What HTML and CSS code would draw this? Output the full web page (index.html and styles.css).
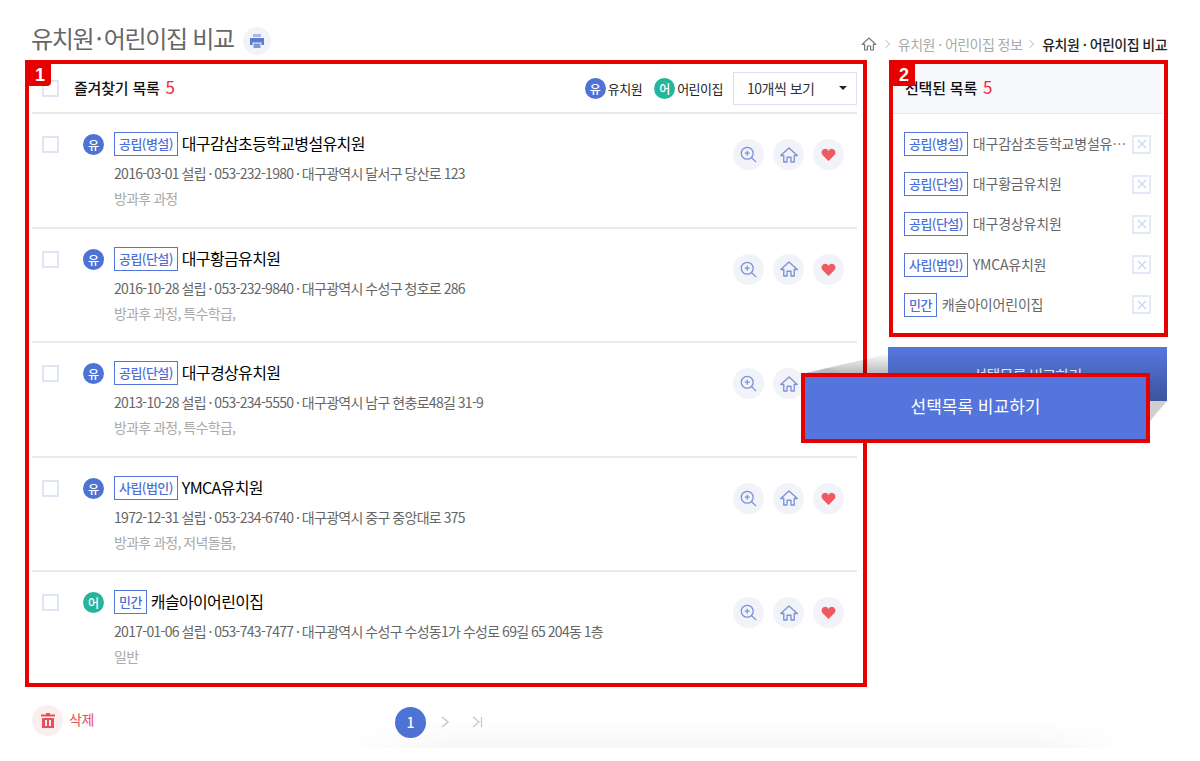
FILE: index.html
```html
<!DOCTYPE html>
<html lang="ko">
  <head>
    <meta charset="UTF-8" />
    <meta name="viewport" content="width=device-width, initial-scale=1.0" />
    <title>유치원·어린이집 비교</title>
    <link rel="stylesheet" href="styles.css">
  </head>
  <body>
    <svg class="defs" width="0" height="0">
      <symbol id="i-zoom" viewBox="0 0 20 20">
        <circle cx="8.500" cy="8.500" r="7" fill="none" stroke="#7b93d6" stroke-width="1.500" />
        <path d="M13.500 13.500L19 19M8.500 5.500v6M5.500 8.500h6" fill="none" stroke="#7b93d6" stroke-width="1.500" />
      </symbol>
      <symbol id="i-home" viewBox="0 0 20 20">
        <path d="M.8 10.500L10 2.200l9.200 8.300h-3.400v7.300h-3.600v-5.300H7.800v5.300H4.200v-7.300z" fill="none" stroke="#7b93d6" stroke-width="1.500" stroke-linejoin="round" />
      </symbol>
      <symbol id="i-heart" viewBox="0 0 20 20">
        <path d="M10 18.500L2 10.600C-.4 8 .6 2.800 5 2.500 7.300 2.300 9 3.500 10 5.300 11 3.500 12.700 2.300 15 2.500 19.400 2.800 20.400 8 18 10.600z" fill="#ee5a5f" />
      </symbol>
      <symbol id="i-close" viewBox="0 0 10 10">
        <path d="M1 1l8 8M9 1L1 9" stroke="#c9d5f2" stroke-width="1.300" fill="none" />
      </symbol>
    </svg>

    <div class="page">
      <header class="top">
        <div class="title-wrap">
          <h1>유치원<span class="dot">·</span>어린이집 비교</h1>
          <span class="print-btn">
            <svg width="16" height="16" viewBox="0 0 16 16">
              <path d="M4 1h8v3H4z" fill="#a9b9e4" />
              <path d="M1 5h14v7h-2.500V9.500h-9V12H1z" fill="#5b7bcf" />
              <path d="M4.500 10.500h7V15h-7z" fill="#7f98da" />
            </svg>
          </span>
        </div>
        <nav class="crumbs">
          <svg class="crumb-home" width="16" height="16" viewBox="0 0 20 20">
            <path d="M1.500 10.500L10 2.500l8.500 8h-3v7h-3.500v-5h-4v5H4.500v-7z" fill="none" stroke="#777" stroke-width="1.500" stroke-linejoin="round" />
          </svg>
          <span class="sep"></span>
          <span>유치원 · 어린이집 정보</span>
          <span class="sep"></span>
          <strong>유치원 · 어린이집 비교</strong>
        </nav>
      </header>

      <div class="columns">
        <main class="list-col">
          <div class="list-head">
            <span class="check"></span>
            <span class="head-title">즐겨찾기 목록 <em>5</em></span>
            <div class="legend">
              <span class="kind kind-yu">유</span><span class="legend-label">유치원</span>
              <span class="kind kind-eo">어</span><span class="legend-label">어린이집</span>
            </div>
            <div class="select">10개씩 보기<i class="caret"></i></div>
          </div>

          <div class="row">
            <span class="check"></span>
            <span class="kind kind-yu">유</span>
            <div class="row-body">
              <div class="row-name"><span class="tag">공립(병설)</span>대구감삼초등학교병설유치원</div>
              <p class="row-info">2016-03-01 설립 · 053-232-1980 · 대구광역시 달서구 당산로 123</p>
              <p class="row-extra">방과후 과정</p>
            </div>
            <div class="actions">
              <span class="act"><svg class="ic-zoom"><use href="#i-zoom" /></svg></span>
              <span class="act"><svg class="ic-home"><use href="#i-home" /></svg></span>
              <span class="act"><svg class="ic-heart"><use href="#i-heart" /></svg></span>
            </div>
          </div>

          <div class="row">
            <span class="check"></span>
            <span class="kind kind-yu">유</span>
            <div class="row-body">
              <div class="row-name"><span class="tag">공립(단설)</span>대구황금유치원</div>
              <p class="row-info">2016-10-28 설립 · 053-232-9840 · 대구광역시 수성구 청호로 286</p>
              <p class="row-extra">방과후 과정, 특수학급,</p>
            </div>
            <div class="actions">
              <span class="act"><svg class="ic-zoom"><use href="#i-zoom" /></svg></span>
              <span class="act"><svg class="ic-home"><use href="#i-home" /></svg></span>
              <span class="act"><svg class="ic-heart"><use href="#i-heart" /></svg></span>
            </div>
          </div>

          <div class="row">
            <span class="check"></span>
            <span class="kind kind-yu">유</span>
            <div class="row-body">
              <div class="row-name"><span class="tag">공립(단설)</span>대구경상유치원</div>
              <p class="row-info">2013-10-28 설립 · 053-234-5550 · 대구광역시 남구 현충로48길 31-9</p>
              <p class="row-extra">방과후 과정, 특수학급,</p>
            </div>
            <div class="actions">
              <span class="act"><svg class="ic-zoom"><use href="#i-zoom" /></svg></span>
              <span class="act"><svg class="ic-home"><use href="#i-home" /></svg></span>
              <span class="act"><svg class="ic-heart"><use href="#i-heart" /></svg></span>
            </div>
          </div>

          <div class="row">
            <span class="check"></span>
            <span class="kind kind-yu">유</span>
            <div class="row-body">
              <div class="row-name"><span class="tag">사립(법인)</span>YMCA유치원</div>
              <p class="row-info">1972-12-31 설립 · 053-234-6740 · 대구광역시 중구 중앙대로 375</p>
              <p class="row-extra">방과후 과정, 저녁돌봄,</p>
            </div>
            <div class="actions">
              <span class="act"><svg class="ic-zoom"><use href="#i-zoom" /></svg></span>
              <span class="act"><svg class="ic-home"><use href="#i-home" /></svg></span>
              <span class="act"><svg class="ic-heart"><use href="#i-heart" /></svg></span>
            </div>
          </div>

          <div class="row">
            <span class="check"></span>
            <span class="kind kind-eo">어</span>
            <div class="row-body">
              <div class="row-name"><span class="tag">민간</span>캐슬아이어린이집</div>
              <p class="row-info">2017-01-06 설립 · 053-743-7477 · 대구광역시 수성구 수성동1가 수성로 69길 65 204동 1층</p>
              <p class="row-extra">일반</p>
            </div>
            <div class="actions">
              <span class="act"><svg class="ic-zoom"><use href="#i-zoom" /></svg></span>
              <span class="act"><svg class="ic-home"><use href="#i-home" /></svg></span>
              <span class="act"><svg class="ic-heart"><use href="#i-heart" /></svg></span>
            </div>
          </div>

          <footer class="list-foot">
            <div class="delete">
              <span class="delete-icon">
                <svg width="14" height="15" viewBox="0 0 14 15">
                  <path d="M5 0h4v1.500h5V3.500H0V1.500h5zM1 5h12v10H1zM4 7v6h2V7zM8 7v6h2V7z" fill="#e8505a" fill-rule="evenodd" />
                </svg>
              </span>
              <span class="delete-label">삭제</span>
            </div>
            <div class="pager">
              <span class="page-now">1</span>
              <svg class="page-arrow" width="10" height="12" viewBox="0 0 10 12"><path d="M2 1l6 5-6 5" fill="none" stroke="#c8c8c8" stroke-width="1.500" /></svg>
              <svg class="page-arrow" width="11" height="12" viewBox="0 0 11 12"><path d="M1 1l6 5-6 5M9.500 1v10" fill="none" stroke="#c8c8c8" stroke-width="1.300" /></svg>
            </div>
          </footer>
        </main>

        <aside class="side-col">
          <div class="side-panel">
            <div class="side-head">선택된 목록 <em>5</em></div>
            <ul class="side-list">
              <li><span class="tag">공립(병설)</span><span class="side-name">대구감삼초등학교병설유치원</span><span class="remove"><svg width="10" height="10"><use href="#i-close" /></svg></span></li>
              <li><span class="tag">공립(단설)</span><span class="side-name">대구황금유치원</span><span class="remove"><svg width="10" height="10"><use href="#i-close" /></svg></span></li>
              <li><span class="tag">공립(단설)</span><span class="side-name">대구경상유치원</span><span class="remove"><svg width="10" height="10"><use href="#i-close" /></svg></span></li>
              <li><span class="tag">사립(법인)</span><span class="side-name">YMCA유치원</span><span class="remove"><svg width="10" height="10"><use href="#i-close" /></svg></span></li>
              <li><span class="tag">민간</span><span class="side-name">캐슬아이어린이집</span><span class="remove"><svg width="10" height="10"><use href="#i-close" /></svg></span></li>
            </ul>
          </div>
          <div class="compare-btn">선택목록 비교하기</div>
        </aside>
      </div>
    </div>

    <!-- annotation layer over the page -->
    <div class="floor-shadow"></div>
    <div class="frame frame-list"><span class="num num-1">1</span></div>
    <div class="frame frame-side"><span class="num">2</span></div>
    <svg class="zoom-shade" width="1200" height="761">
      <defs>
        <linearGradient id="shade-top" x1="0" y1="0" x2="0" y2="1">
          <stop offset="0" stop-color="#000" stop-opacity="0.02" />
          <stop offset="1" stop-color="#000" stop-opacity="0.28" />
        </linearGradient>
      </defs>
      <polygon points="801,374 888,354 888,374" fill="url(#shade-top)" />
      <rect x="888" y="354" width="279" height="47" fill="url(#shade-top)" />
      <polygon points="1150,401 1167,401 1150,421" fill="#cfcfcf" />
    </svg>
    <div class="callout">선택목록 비교하기</div>
  </body>
</html>
```

FILE: styles.css
```css
* {
  box-sizing: border-box;
}
html,
body {
  margin: 0;
  height: 761px;
  overflow: hidden;
}
body {
  position: relative;
  background: #fff;
  font-family: "Noto Sans CJK KR", "Noto Sans", sans-serif;
  color: #666;
  letter-spacing: -0.5px;
}
p,
h1,
ul {
  margin: 0;
  padding: 0;
}
em {
  font-style: normal;
  color: #ee2a35;
}
.defs {
  position: absolute;
}
.page {
  padding: 0 33px 0 32px;
}

/* top */
.top {
  display: flex;
  justify-content: space-between;
  height: 64px;
}
.title-wrap {
  display: flex;
  align-items: center;
  height: 56px;
  padding-top: 26px;
}
h1 {
  margin-left: -1px;
  padding-bottom: 7px;
  font-size: 24px;
  font-weight: 400;
  line-height: 24px;
  color: #666;
  letter-spacing: -1.300px;
}
h1 .dot {
  margin: 0 2.500px;
}
.print-btn {
  display: flex;
  align-items: center;
  justify-content: center;
  width: 28px;
  height: 28px;
  margin-left: 9px;
  border-radius: 50%;
  background: #f1f3f9;
}
.crumbs {
  display: flex;
  align-items: center;
  height: 22px;
  margin-top: 33px;
  font-size: 14px;
  color: #aaa;
  letter-spacing: -0.55px;
}
.crumbs strong {
  font-weight: 500;
  color: #222;
}
.crumb-home {
  margin-right: 1px;
}
.sep {
  width: 6px;
  height: 6px;
  margin: 0 9px 0 5px;
  border-top: 1px solid #ccc;
  border-right: 1px solid #ccc;
  transform: rotate(45deg);
}

.columns {
  display: flex;
  justify-content: space-between;
}
.list-col {
  width: 825px;
}
.side-col {
  width: 279px;
}

/* list */
.list-head {
  display: flex;
  align-items: center;
  height: 50px;
  padding: 0 0 0 10px;
  border-bottom: 2px solid #e8e8e8;
}
.check {
  flex: none;
  width: 17px;
  height: 17px;
  border: 2px solid #dfe6f3;
  background: #fff;
}
.head-title {
  margin: -4px 0 0 15px;
  font-size: 15px;
  font-weight: 500;
  color: #111;
  letter-spacing: -0.2px;
}
.head-title em {
  font-size: 17px;
  font-weight: 400;
  margin-left: 2px;
}
.legend {
  display: flex;
  align-items: center;
  margin-left: auto;
  font-size: 13px;
  color: #222;
}
.legend-label {
  margin: 0 12px 0 2px;
}
.legend-label:last-child {
  margin-right: 10px;
}
.kind {
  display: flex;
  align-items: center;
  justify-content: center;
  flex: none;
  width: 21px;
  height: 21px;
  border-radius: 50%;
  font-size: 12px;
  font-weight: 500;
  color: #fff;
  letter-spacing: 0;
}
.kind-yu {
  background: #4e73d6;
}
.kind-eo {
  background: #25b59a;
}
.select {
  display: flex;
  align-items: center;
  justify-content: space-between;
  width: 124px;
  height: 33px;
  padding: 0 9px 0 13px;
  border: 1.500px solid #d8e2f2;
  background: #fff;
  font-size: 14px;
  color: #333;
}
.caret {
  width: 0;
  height: 0;
  border-left: 4px solid transparent;
  border-right: 4px solid transparent;
  border-top: 4px solid #222;
}

.row {
  display: flex;
  height: 114.6px;
  padding: 18px 13px 0 10px;
  border-bottom: 2px solid #eaeaea;
}
.row:last-of-type {
  border-bottom: 0;
}
.row .check {
  margin-top: 4px;
}
.row .kind {
  margin: 2px 10px 0 24px;
}
.row-name {
  display: flex;
  align-items: flex-start;
  height: 24px;
  font-size: 16px;
  line-height: 22px;
  color: #000;
  letter-spacing: -0.65px;
}
.tag {
  display: flex;
  align-items: center;
  flex: none;
  height: 24px;
  margin-right: 4px;
  padding: 0 4px;
  border: 1.500px solid #5475db;
  background: #fff;
  font-size: 13px;
  font-weight: 500;
  line-height: 20px;
  color: #4e6fd8;
  letter-spacing: -0.55px;
}
.row-info,
.row-extra {
  font-size: 14px;
  letter-spacing: -0.7px;
  word-spacing: -0.6px;
}
.row-info {
  margin-top: 6px;
  line-height: 22px;
  color: #666;
}
.row-extra {
  margin-top: 4px;
  line-height: 20px;
  color: #aaa;
}
.actions {
  display: flex;
  gap: 9px;
  margin: 7px 0 0 auto;
}
.act {
  display: flex;
  align-items: center;
  justify-content: center;
  width: 31px;
  height: 31px;
  border-radius: 50%;
  background: #f1f3f9;
}
.ic-zoom {
  width: 17px;
  height: 17px;
}
.ic-home {
  width: 18px;
  height: 18px;
}
.ic-heart {
  width: 15px;
  height: 15px;
}

/* footer */
.list-foot {
  position: relative;
  display: flex;
  height: 60px;
  padding-top: 18px;
}
.delete {
  display: flex;
  align-items: center;
  height: 31px;
  font-size: 14px;
  color: #e8505a;
}
.delete-label {
  margin-top: -2px;
}
.delete-icon {
  display: flex;
  align-items: center;
  justify-content: center;
  width: 31px;
  height: 31px;
  margin-right: 6px;
  border-radius: 50%;
  background: #f9efef;
}
.pager {
  display: flex;
  align-items: center;
  margin: 2px 0 0 301px;
  height: 31px;
}
.page-now {
  display: flex;
  align-items: center;
  justify-content: center;
  width: 31px;
  height: 31px;
  border-radius: 50%;
  background: #4e73d6;
  font-size: 14px;
  font-weight: 500;
  color: #fff;
}
.page-arrow {
  margin-left: 14px;
}
.page-arrow + .page-arrow {
  margin-left: 22px;
}

/* selected list */
.side-panel {
  height: 269px;
  margin: 0 0 14px 5px;
  width: 270px;
}
.side-head {
  height: 50px;
  padding: 10px 0 0 12px;
  background: #f8f9fc;
  border-bottom: 1px solid #e8e8e8;
  font-size: 15px;
  font-weight: 500;
  line-height: 26px;
  color: #111;
  letter-spacing: -0.2px;
}
.side-head em {
  font-size: 17px;
  font-weight: 400;
  margin-left: 2px;
}
.side-list {
  list-style: none;
  padding: 10px 12px 0 11px;
}
.side-list li {
  display: flex;
  align-items: center;
  height: 40.2px;
}
.side-list .tag {
  margin-right: 5px;
}
.side-name {
  flex: 1;
  min-width: 0;
  margin-top: -2px;
  overflow: hidden;
  white-space: nowrap;
  text-overflow: ellipsis;
  font-size: 14px;
  color: #666;
  letter-spacing: -0.2px;
}
.remove {
  display: flex;
  align-items: center;
  justify-content: center;
  flex: none;
  width: 19px;
  height: 19px;
  margin-left: 5px;
  border: 2px solid #e3e9f8;
  background: #fff;
}
.compare-btn {
  display: flex;
  align-items: center;
  justify-content: center;
  height: 54px;
  background: #5475db;
  font-size: 15px;
  color: #fff;
  letter-spacing: -0.7px;
}

/* annotations */
.frame {
  position: absolute;
  border: 4px solid #e60000;
}
.frame-list {
  left: 25px;
  top: 60px;
  width: 842px;
  height: 627px;
}
.frame-side {
  left: 889px;
  top: 60px;
  width: 279px;
  height: 277px;
}
.num {
  position: absolute;
  left: 0;
  top: 0;
  display: flex;
  align-items: center;
  justify-content: center;
  width: 22px;
  height: 22px;
  background: #e60000;
  font-family: "Liberation Sans", sans-serif;
  font-size: 18px;
  font-weight: 700;
  color: #fff;
  letter-spacing: 0;
}
.num-1 {
  border-bottom-right-radius: 4px;
}
.zoom-shade {
  position: absolute;
  left: 0;
  top: 0;
}
.callout {
  position: absolute;
  left: 801px;
  top: 373px;
  display: flex;
  align-items: center;
  justify-content: center;
  width: 349px;
  height: 70px;
  padding-bottom: 6px;
  border: 4px solid #e60000;
  background: #5475db;
  font-size: 17px;
  color: #fff;
  letter-spacing: 0;
}
.floor-shadow {
  position: absolute;
  left: 340px;
  top: 720px;
  width: 790px;
  height: 28px;
  background: linear-gradient(180deg, rgba(0, 0, 0, 0), rgba(0, 0, 0, 0.035));
  -webkit-mask-image: linear-gradient(90deg, transparent, #000 15%, #000 88%, transparent);
  mask-image: linear-gradient(90deg, transparent, #000 15%, #000 88%, transparent);
}
```
